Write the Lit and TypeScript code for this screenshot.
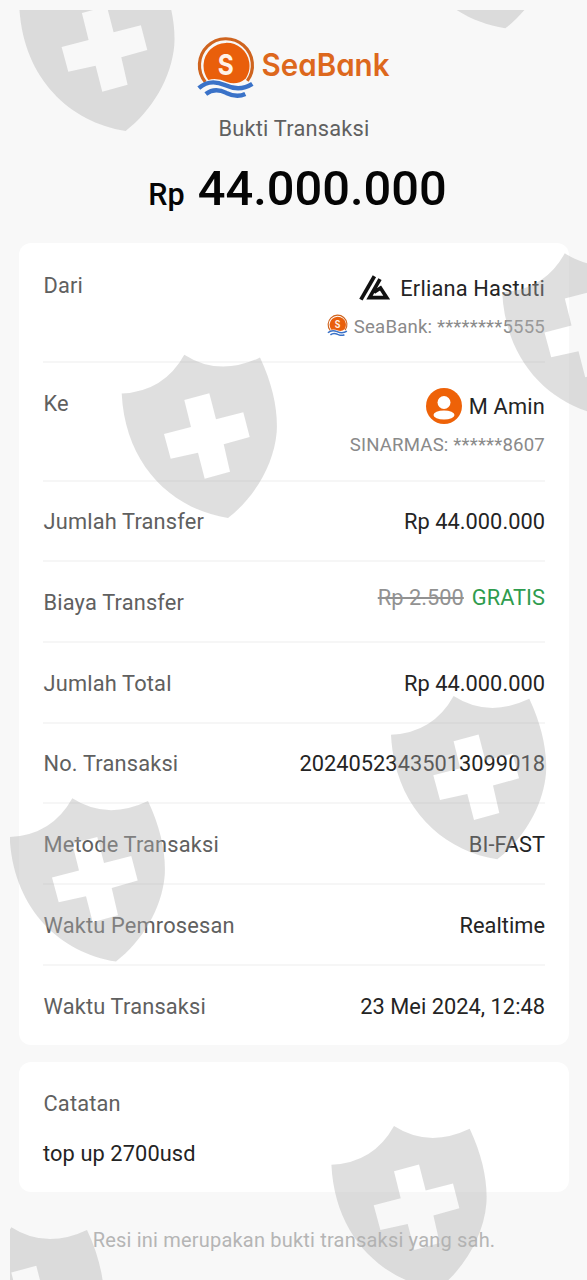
import { LitElement, html, css, svg } from "lit";
import { customElement } from "lit/decorators.js";

const SHIELDS: [number, number][] = [
  [18.6, -33],
  [398.3, -135.7],
  [501.5, 252.6],
  [121, 354],
  [390.3, 695.3],
  [9, 797.6],
  [330.7, 1125.3],
  [-52, 1226.5],
];

const SHIELD_PATH =
  "M.7 39.5Q43 37.500 63.300 .7Q98 23 139 3.500C152 31 157 57 155.700 78C153 111 133 144 107 164C50 155 4 110 .7 39.500Z" +
  "M63.300 46L88.300 39.300L95 65.300L122.300 58.300L128.700 83L102.700 90.300L109 117.700L83.700 124.700L77 98.700L49.700 104.700L43 80L70 73Z";

const emblem = svg`
  <path d="M8.500 46.500A26.500 26.500 0 1 1 50.500 45.500" fill="none" stroke="#cf641f" stroke-width="3.200"/>
  <path d="M11.500 44.500A23 23 0 1 1 49 43Q40 50.500 30 46.500Q20 42 11.500 44.500Z" fill="#e95f0b"/>
  <path d="M2 52.800Q13 43 28 49.700Q43 56.500 55.500 48.500" fill="none" stroke="#3a72c8" stroke-width="4.400"/>
  <path d="M9 58.600Q18 51.500 29.500 57.500Q40 62.500 48.500 58.500" fill="none" stroke="#3a72c8" stroke-width="4.400"/>
  <text x="21" y="39.500" textLength="16" lengthAdjust="spacingAndGlyphs" font-family="Inter, sans-serif" font-weight="700" font-size="29" fill="#fff3e8">S</text>`;

@customElement("app-root")
export class AppRoot extends LitElement {
  static styles = css`
    :host {
      display: block;
      position: relative;
      width: 587px;
      height: 1280px;
      overflow: hidden;
      background: #f8f8f8;
      font-family: Roboto, sans-serif;
      font-size: 21.8px;
      line-height: 26px;
      color: #242424;
    }
    .page { display: flex; flex-direction: column; padding: 35px 18px 0 19px; }
    .logo { display: block; width: 196px; height: 66px; margin-left: 177px; overflow: visible; }
    .wordmark { font-feature-settings: "cv11"; }
    .title { text-align: center; margin-top: 15px; color: #606060; letter-spacing: 0.22px; }
    .amount {
      display: flex; align-items: baseline; justify-content: center; gap: 13px;
      margin: 17px 0 0 7px; height: 60px; line-height: 60px;
      font-weight: 500; font-size: 48.8px; color: #050505;
    }
    .amount .cur { font-size: 30.500px; padding-top: 1px; }
    .card { background: #fff; border-radius: 12px; padding: 0 24px; }
    .details { margin-top: 24px; height: 802px; box-sizing: border-box; }
    .row {
      display: flex; justify-content: space-between; align-items: center;
      height: 80.7px; box-sizing: border-box; border-bottom: 2px solid #f6f6f6;
      padding-top: 2.500px;
    }
    .row:last-child { border-bottom: 0; padding-top: 2px; }
    .row.party { height: 118.6px; align-items: flex-start; padding-top: 28px; }
    .row.party.first { height: 120px; padding-top: 30px; }
    .label { color: #606060; letter-spacing: 0.18px; padding-left: 0.5px; }
    .value { letter-spacing: 0.03px; }
    .side { display: flex; flex-direction: column; align-items: flex-end; }
    .name { display: flex; align-items: center; height: 32px; }
    .name.first { gap: 10px; }
    .name.second { gap: 7px; }
    .who { letter-spacing: 0.2px; }
    .picture { margin-top: -2px; }
    .bank { display: flex; align-items: center; gap: 6px; font-size: 18.6px; color: #8a8a8a; height: 26px; margin-top: 8.500px; letter-spacing: 0.18px; }
    .badge { margin-top: -4px; }
    .fee { display: flex; gap: 8px; margin-top: -10px; }
    .old { color: #929292; text-decoration: line-through; text-decoration-thickness: 1.5px; }
    .free { color: #2f9c4e; }
    .note { display: flex; flex-direction: column; gap: 24px; margin-top: 17px; height: 130px; box-sizing: border-box; padding-top: 29px; }
    .memo { letter-spacing: 0.1px; }
    .foot { margin-top: 36px; text-align: center; color: #b5b5b5; font-size: 20px; line-height: 24px; letter-spacing: 0.2px; }
    .mark { position: absolute; left: 0; top: 0; pointer-events: none; }
  `;

  private row(label: string, value: unknown) {
    return html`<div class="row"><span class="label">${label}</span><span class="value">${value}</span></div>`;
  }

  render() {
    return html`
      <div class="page">
        <svg class="logo" viewBox="0 0 196 66">
          <g transform="translate(0.8 0.4)">${emblem}</g>
          <text class="wordmark" x="65.500" y="41" font-family="Inter, sans-serif" font-weight="600" font-size="31"
            textLength="128" lengthAdjust="spacingAndGlyphs" fill="#dd681d">SeaBank</text>
        </svg>
        <div class="title">Bukti Transaksi</div>
        <div class="amount"><span class="cur">Rp</span><span class="num">44.000.000</span></div>

        <div class="card details">
          <div class="row party first">
            <span class="label">Dari</span>
            <div class="side">
              <div class="name first">
                <svg class="picture" width="31" height="26" viewBox="0 0 31 26">
                  <path d="M1.900 24.600L15.400 1.200" fill="none" stroke="#111" stroke-width="3.800"/>
                  <path d="M21 4.200L10.500 22.700H27.800L21.500 13L15 17.300" fill="none" stroke="#111" stroke-width="3.700"/>
                </svg>
                <span class="who">Erliana Hastuti</span>
              </div>
              <div class="bank">
                <svg class="badge" width="21" height="22" viewBox="0 0 58 62">${emblem}</svg>
                <span class="acct">SeaBank: ********5555</span>
              </div>
            </div>
          </div>
          <div class="row party">
            <span class="label">Ke</span>
            <div class="side">
              <div class="name second">
                <svg class="picture" width="36" height="36" viewBox="0 0 36 36">
                  <circle cx="18" cy="18" r="18" fill="#ee6208"/>
                  <circle cx="18" cy="14.500" r="6.500" fill="#fff"/>
                  <ellipse cx="18" cy="27" rx="10.500" ry="4.600" fill="#fff"/>
                </svg>
                <span class="who">M Amin</span>
              </div>
              <div class="bank">SINARMAS: ******8607</div>
            </div>
          </div>
          ${this.row("Jumlah Transfer", "Rp 44.000.000")}
          ${this.row("Biaya Transfer", html`<span class="fee"><span class="old">Rp 2.500</span><span class="free">GRATIS</span></span>`)}
          ${this.row("Jumlah Total", "Rp 44.000.000")}
          ${this.row("No. Transaksi", "20240523435013099018")}
          ${this.row("Metode Transaksi", "BI-FAST")}
          ${this.row("Waktu Pemrosesan", "Realtime")}
          ${this.row("Waktu Transaksi", "23 Mei 2024, 12:48")}
        </div>

        <div class="card note">
          <span class="label">Catatan</span>
          <span class="memo">top up 2700usd</span>
        </div>
        <div class="foot">Resi ini merupakan bukti transaksi yang sah.</div>
      </div>

      <svg class="mark" width="587" height="1280" viewBox="0 0 587 1280">
        <defs><clipPath id="area"><rect x="10" y="10" width="577" height="1270"/></clipPath></defs>
        <g clip-path="url(#area)">
          <g fill="#aeaeae" fill-opacity="0.4" fill-rule="evenodd">
            ${SHIELDS.map(([x, y]) => svg`<path transform="translate(${x} ${y})" d=${SHIELD_PATH}/>`)}
          </g>
        </g>
      </svg>
    `;
  }
}
